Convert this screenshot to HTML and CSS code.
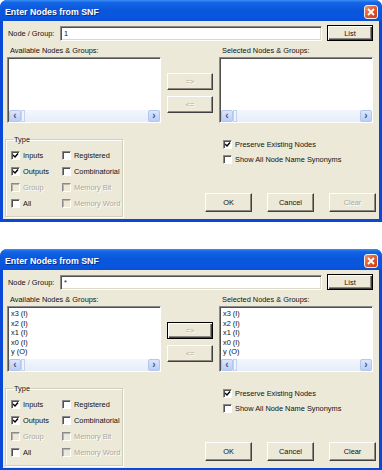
FILE: index.html
```html
<!DOCTYPE html>
<html>
<head>
<meta charset="utf-8">
<title>Enter Nodes from SNF</title>
<link rel="stylesheet" href="styles.css">
</head>
<body>

<div class="dialog">
<div class="titlebar">
	<span class="title">Enter Nodes from SNF</span>
	<span class="close"><svg width="8" height="8" viewBox="0 0 8 8"><path d="M1 1 L7 7 M7 1 L1 7" stroke="#fff" stroke-width="1.8"/></svg></span>
</div>
<div class="body">
	<div class="row-node">
		<span class="node-label">Node / Group:</span>
		<div class="field">1</div>
		<div class="btn btn-default">List</div>
	</div>
	<div class="row-lists">
		<div class="listcol">
			<div class="list-label">Available Nodes &amp; Groups:</div>
			<div class="listbox">
				<div class="items"></div>
				<div class="hscroll"><span class="sb-btn">&#8249;</span><span class="sb-thumb"></span><span class="sb-track"></span><span class="sb-btn">&#8250;</span></div>
			</div>
		</div>
		<div class="movebtns">
			<div class="btn disabled">=&gt;</div>
			<div class="btn disabled">&lt;=</div>
		</div>
		<div class="listcol">
			<div class="list-label">Selected Nodes &amp; Groups:</div>
			<div class="listbox">
				<div class="items"></div>
				<div class="hscroll"><span class="sb-btn">&#8249;</span><span class="sb-thumb"></span><span class="sb-track"></span><span class="sb-btn">&#8250;</span></div>
			</div>
		</div>
	</div>
	<div class="row-bottom">
		<fieldset class="typebox">
			<legend>Type</legend>
			<div class="checkgrid">
				<div class="cb"><span class="box checked"></span>Inputs</div>
				<div class="cb"><span class="box"></span>Registered</div>
				<div class="cb"><span class="box checked"></span>Outputs</div>
				<div class="cb"><span class="box"></span>Combinatorial</div>
				<div class="cb disabled"><span class="box"></span>Group</div>
				<div class="cb disabled"><span class="box"></span>Memory Bit</div>
				<div class="cb"><span class="box"></span>All</div>
				<div class="cb disabled"><span class="box"></span>Memory Word</div>
			</div>
		</fieldset>
		<div class="right">
			<div class="opts">
				<div class="cb"><span class="box checked"></span>Preserve Existing Nodes</div>
				<div class="cb"><span class="box"></span>Show All Node Name Synonyms</div>
			</div>
			<div class="actions">
				<div class="btn">OK</div>
				<div class="btn">Cancel</div>
				<div class="btn disabled">Clear</div>
			</div>
		</div>
	</div>
</div>
</div>

<div class="dialog second">
<div class="titlebar">
	<span class="title">Enter Nodes from SNF</span>
	<span class="close"><svg width="8" height="8" viewBox="0 0 8 8"><path d="M1 1 L7 7 M7 1 L1 7" stroke="#fff" stroke-width="1.8"/></svg></span>
</div>
<div class="body">
	<div class="row-node">
		<span class="node-label">Node / Group:</span>
		<div class="field">*</div>
		<div class="btn btn-default">List</div>
	</div>
	<div class="row-lists">
		<div class="listcol">
			<div class="list-label">Available Nodes &amp; Groups:</div>
			<div class="listbox">
				<div class="items">
					<div>x3 (I)</div>
					<div>x2 (I)</div>
					<div>x1 (I)</div>
					<div>x0 (I)</div>
					<div>y (O)</div>
				</div>
				<div class="hscroll"><span class="sb-btn">&#8249;</span><span class="sb-thumb"></span><span class="sb-track"></span><span class="sb-btn">&#8250;</span></div>
			</div>
		</div>
		<div class="movebtns">
			<div class="btn focused disabled">=&gt;</div>
			<div class="btn disabled">&lt;=</div>
		</div>
		<div class="listcol">
			<div class="list-label">Selected Nodes &amp; Groups:</div>
			<div class="listbox">
				<div class="items">
					<div>x3 (I)</div>
					<div>x2 (I)</div>
					<div>x1 (I)</div>
					<div>x0 (I)</div>
					<div>y (O)</div>
				</div>
				<div class="hscroll"><span class="sb-btn">&#8249;</span><span class="sb-thumb"></span><span class="sb-track"></span><span class="sb-btn">&#8250;</span></div>
			</div>
		</div>
	</div>
	<div class="row-bottom">
		<fieldset class="typebox">
			<legend>Type</legend>
			<div class="checkgrid">
				<div class="cb"><span class="box checked"></span>Inputs</div>
				<div class="cb"><span class="box"></span>Registered</div>
				<div class="cb"><span class="box checked"></span>Outputs</div>
				<div class="cb"><span class="box"></span>Combinatorial</div>
				<div class="cb disabled"><span class="box"></span>Group</div>
				<div class="cb disabled"><span class="box"></span>Memory Bit</div>
				<div class="cb"><span class="box"></span>All</div>
				<div class="cb disabled"><span class="box"></span>Memory Word</div>
			</div>
		</fieldset>
		<div class="right">
			<div class="opts">
				<div class="cb"><span class="box checked"></span>Preserve Existing Nodes</div>
				<div class="cb"><span class="box"></span>Show All Node Name Synonyms</div>
			</div>
			<div class="actions">
				<div class="btn">OK</div>
				<div class="btn">Cancel</div>
				<div class="btn">Clear</div>
			</div>
		</div>
	</div>
</div>
</div>

</body>
</html>
```

FILE: styles.css
```css
* {
	box-sizing: border-box;
}
body {
	margin: 0;
	background-color: white;
	font-family: "Liberation Sans", Arial, sans-serif;
	font-size: 7.4px;
	color: #111;
}
.dialog {
	width: 382px;
	height: 222px;
	display: flex;
	flex-direction: column;
	background-color: #0a48d8;
	border-radius: 7px 7px 0 0;
	overflow: hidden;
}
.dialog.second {
	margin-top: 27px;
}
.titlebar {
	height: 21px;
	flex: none;
	display: flex;
	align-items: center;
	padding: 2px 4px 0 5px;
	background: linear-gradient(#3d8ef5 0, #1466e6 12%, #0a57dc 45%, #0856e0 85%, #0a4fd0 100%);
}
.title {
	color: white;
	font-weight: bold;
	font-size: 8.8px;
	text-shadow: 1px 1px #0a2d8c;
}
.close {
	margin-left: auto;
	width: 14px;
	height: 14px;
	display: flex;
	align-items: center;
	justify-content: center;
	border: 1px solid #f4f0f0;
	border-radius: 3px;
	background: linear-gradient(135deg, #f0916e, #e05a2f 50%, #c83c18);
}
.body {
	flex: 1;
	margin: 0 3px 3px 3px;
	background-color: #ece9d8;
	padding: 4px 3px 0 4px;
}

/* top row */
.row-node {
	display: flex;
	align-items: center;
	height: 16px;
}
.node-label {
	width: 53px;
	padding-left: 1px;
	white-space: nowrap;
}
.field {
	width: 262px;
	height: 15px;
	background-color: white;
	border: 1px solid;
	border-color: #8a8a8a #fff #fff #8a8a8a;
	box-shadow: inset 1px 1px #505050, inset -1px -1px #dcd8cc;
	padding: 1px 3px;
	line-height: 11px;
}
.btn {
	display: flex;
	align-items: center;
	justify-content: center;
	background-color: #ece9d8;
	border: 1px solid;
	border-color: #fff #404040 #404040 #fff;
	box-shadow: inset -1px -1px #8c8a80;
}
.btn.disabled {
	color: #aca899;
	text-shadow: 1px 1px #fff;
}
.btn-default {
	margin-left: 5px;
	width: 46px;
	height: 16px;
	border-color: #000;
	box-shadow: inset 1px 1px #fff, inset -1px -1px #404040, inset -2px -2px #8c8a80;
}
.btn.focused {
	border-color: #000;
	box-shadow: inset 1px 1px #fff, inset -1px -1px #404040, inset -2px -2px #8c8a80;
}

/* lists */
.row-lists {
	display: grid;
	grid-template-columns: 154px 46px 154px;
	column-gap: 6px;
	margin-top: 3px;
}
.list-label {
	height: 13px;
	line-height: 13px;
	padding-left: 3px;
	white-space: nowrap;
}
.listbox {
	height: 66px;
	display: flex;
	flex-direction: column;
	background-color: white;
	border: 1px solid;
	border-color: #8a8a8a #fff #fff #8a8a8a;
	box-shadow: inset 1px 1px #505050;
	padding: 1px 0 0 1px;
}
.items {
	flex: 1;
	padding: 1px 2px;
	line-height: 9.5px;
}
.hscroll {
	height: 12px;
	flex: none;
	display: flex;
	background: linear-gradient(#f3f6fc, #e6edf9);
}
.sb-btn {
	width: 12px;
	display: flex;
	align-items: center;
	justify-content: center;
	background: linear-gradient(#dbe6fd, #b9cdf6);
	border: 1px solid #b4c6ee;
	border-radius: 2px;
	color: #3c5386;
	font-weight: bold;
	font-size: 10px;
	line-height: 1;
}
.sb-thumb {
	width: 4px;
	border: 1px solid #c3d2ef;
	background: #eef3fd;
}
.sb-track {
	flex: 1;
}
.movebtns {
	display: flex;
	flex-direction: column;
	gap: 6px;
	padding-top: 29px;
}
.movebtns .btn {
	height: 17px;
}

/* bottom */
.row-bottom {
	display: flex;
	margin-top: 11px;
}
.typebox {
	margin: 0 0 0 -2px;
	padding: 0 0 0 5px;
	width: 118px;
	height: 83px;
	border: 1px solid #d0d0bf;
	box-shadow: inset 1px 1px #fff, 1px 1px #fff;
}
.typebox legend {
	margin-left: 2px;
	padding: 0 1px;
	line-height: 11px;
}
.checkgrid {
	display: grid;
	grid-template-columns: 51px 60px;
	grid-auto-rows: 16px;
	padding-top: 2px;
}
.cb {
	display: flex;
	align-items: center;
	white-space: nowrap;
}
.cb.disabled {
	color: #aca899;
	text-shadow: 1px 1px #fff;
}
.box {
	width: 9px;
	height: 9px;
	flex: none;
	margin-right: 3px;
	background-color: white;
	border: 1px solid;
	border-color: #8a8a8a #fff #fff #8a8a8a;
	box-shadow: inset 1px 1px #505050;
}
.cb.disabled .box {
	background-color: #ece9d8;
	box-shadow: inset 1px 1px #b8b4a8;
}
.box.checked {
	background: white url("data:image/svg+xml;utf8,<svg xmlns='http://www.w3.org/2000/svg' width='7' height='7' viewBox='0 0 7 7'><path d='M1 3 L3 5 L6 1.5' fill='none' stroke='black' stroke-width='1.4'/></svg>") no-repeat 0 0;
}
.right {
	margin-left: auto;
	width: 171px;
	display: flex;
	flex-direction: column;
}
.opts {
	margin-left: 18px;
	padding-top: 3px;
}
.opts .cb {
	height: 15px;
}
.actions {
	display: flex;
	justify-content: space-between;
	margin-top: 26px;
}
.actions .btn {
	width: 47px;
	height: 19px;
}
```
